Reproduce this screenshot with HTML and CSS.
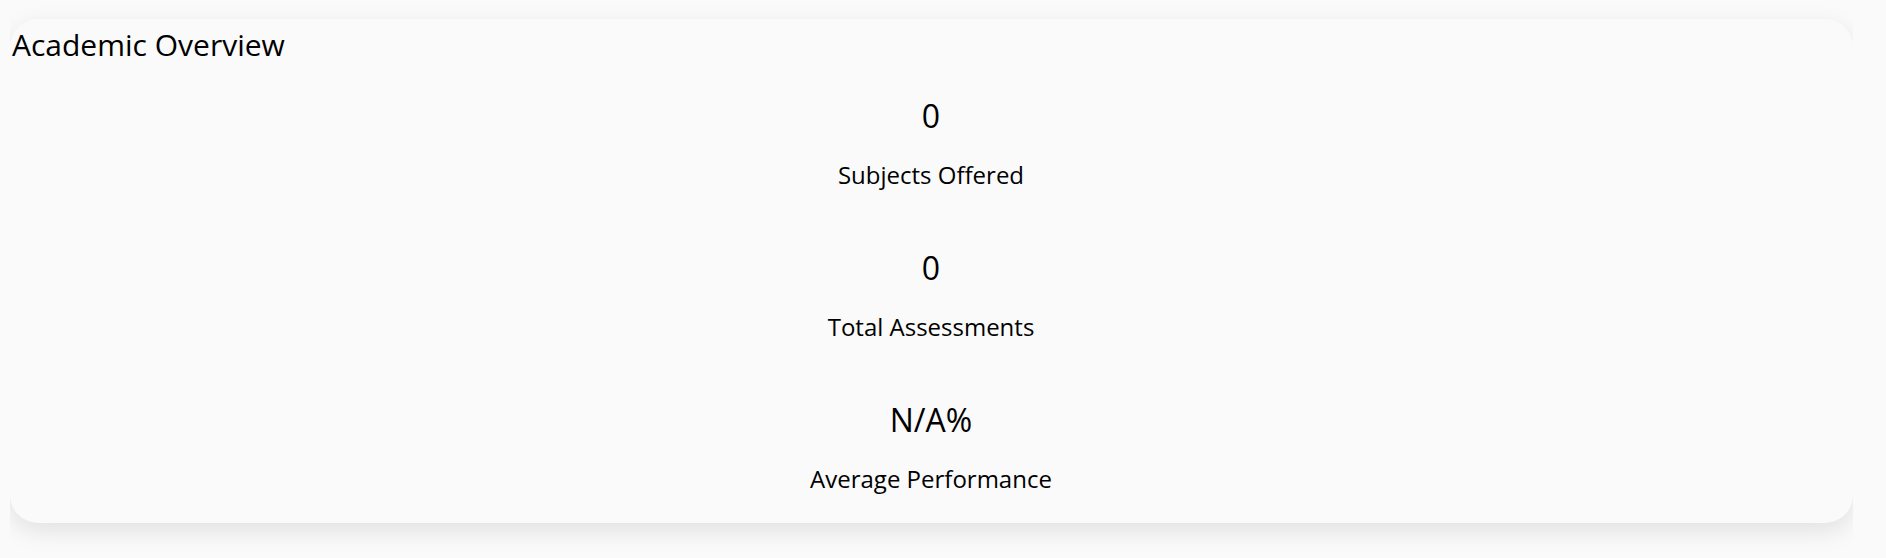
FILE: index.html
```html
<!DOCTYPE html>
<html lang="en">
<head>
<meta charset="utf-8">
<title>Academic Overview</title>
<link rel="stylesheet" href="styles.css">
</head>
<body>
<div class="wrap">
  <section class="card">
    <h2 class="card-title">Academic Overview</h2>
    <div class="stats">
      <div class="stat">
        <div class="stat-value">0</div>
        <div class="stat-label">Subjects Offered</div>
      </div>
      <div class="stat">
        <div class="stat-value">0</div>
        <div class="stat-label">Total Assessments</div>
      </div>
      <div class="stat">
        <div class="stat-value">N/A%</div>
        <div class="stat-label">Average Performance</div>
      </div>
    </div>
  </section>
</div>
</body>
</html>
```

FILE: styles.css
```css
html, body {
  margin: 0;
  padding: 0;
  background: #fafafa;
}

body {
  font-family: "Open Sans", "Noto Sans", sans-serif;
  color: #000;
}

.wrap {
  margin-left: 10px;
  width: 1843px;
  overflow: hidden;
  padding: 19px 0 34px;
}

.card {
  background: #fafafa;
  border-radius: 28px;
  box-shadow: 0 8px 24px rgba(0, 0, 0, 0.1);
  padding: 6px 3px 28px 2px;
}

.card-title {
  margin: 0 0 31px;
  font-size: 30px;
  line-height: 40px;
  font-weight: 400;
}

.stats {
  display: flex;
  flex-direction: column;
  gap: 57px;
}

.stat {
  display: flex;
  flex-direction: column;
  align-items: center;
  gap: 22px;
}

.stat-value {
  font-size: 32px;
  line-height: 40px;
}

.stat-label {
  font-size: 24px;
  line-height: 33px;
}
```
